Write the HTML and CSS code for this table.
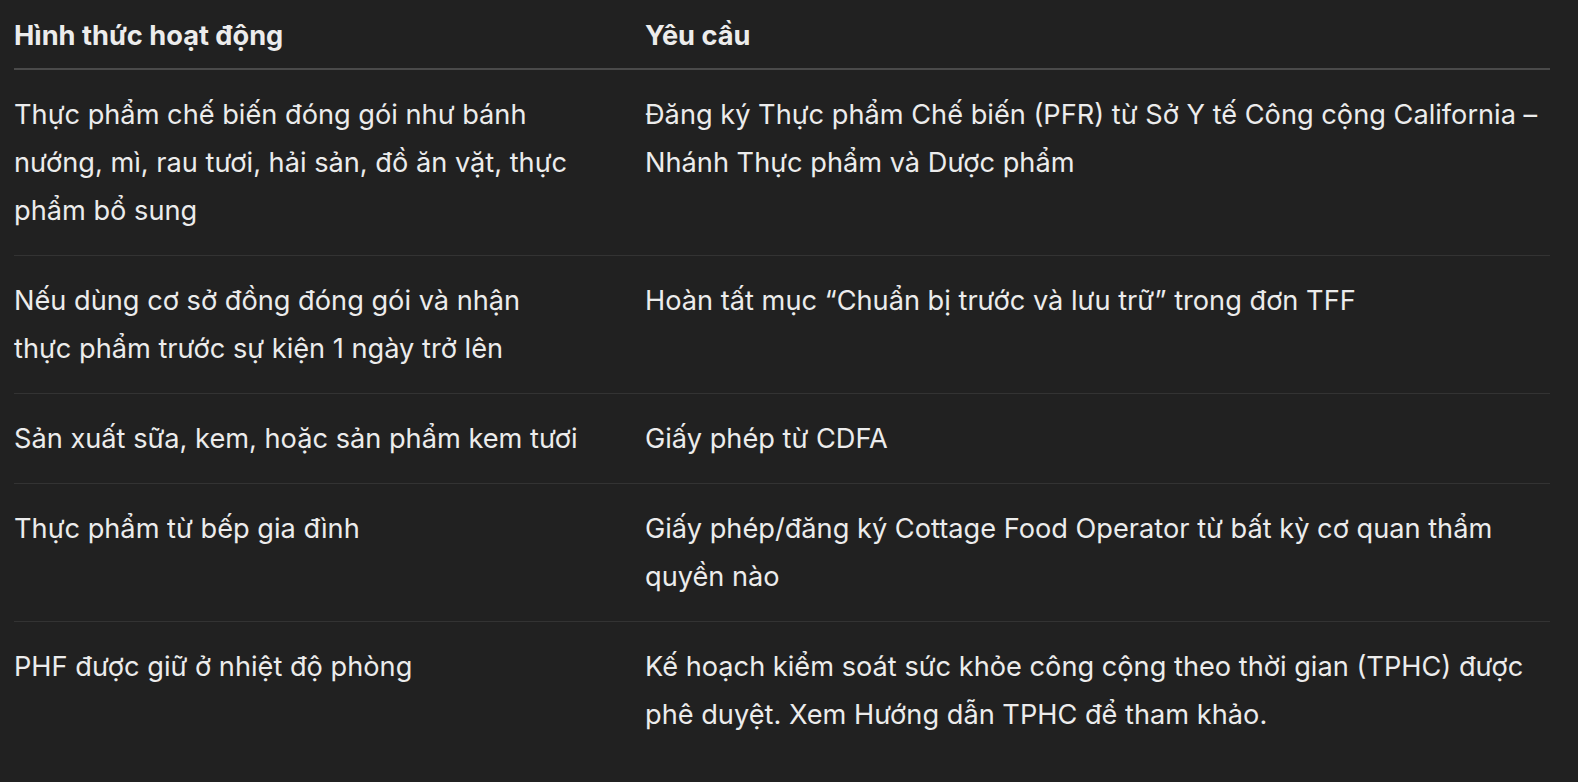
FILE: index.html
```html
<!DOCTYPE html>
<html lang="vi">
<head>
  <meta charset="UTF-8" />
  <meta name="viewport" content="width=device-width, initial-scale=1.0"/>
  <title>Yêu cầu theo hình thức hoạt động</title>
  <link rel="stylesheet" href="styles.css">
</head>
<body>
  <div class="wrap">
    <table class="req-table">
      <colgroup>
        <col class="col-type">
        <col class="col-req">
      </colgroup>
      <thead>
        <tr>
          <th>Hình thức hoạt động</th>
          <th>Yêu cầu</th>
        </tr>
      </thead>
      <tbody>
        <tr>
          <td>Thực phẩm chế biến đóng gói như bánh nướng, mì, rau tươi, hải sản, đồ ăn vặt, thực phẩm bổ sung</td>
          <td>Đăng ký Thực phẩm Chế biến (PFR) từ Sở Y tế Công cộng California – Nhánh Thực phẩm và Dược phẩm</td>
        </tr>
        <tr>
          <td>Nếu dùng cơ sở đồng đóng gói và nhận thực phẩm trước sự kiện 1 ngày trở lên</td>
          <td>Hoàn tất mục “Chuẩn bị trước và lưu trữ” trong đơn TFF</td>
        </tr>
        <tr>
          <td>Sản xuất sữa, kem, hoặc sản phẩm kem tươi</td>
          <td>Giấy phép từ CDFA</td>
        </tr>
        <tr>
          <td>Thực phẩm từ bếp gia đình</td>
          <td>Giấy phép/đăng ký Cottage Food Operator từ bất kỳ cơ quan thẩm quyền nào</td>
        </tr>
        <tr>
          <td>PHF được giữ ở nhiệt độ phòng</td>
          <td>Kế hoạch kiểm soát sức khỏe công cộng theo thời gian (TPHC) được phê duyệt. Xem Hướng dẫn TPHC để tham khảo.</td>
        </tr>
      </tbody>
    </table>
  </div>
</body>
</html>
```

FILE: styles.css
```css
body {
  margin: 0;
  padding: 0;
  background: #212121;
  color: #ececec;
  font-family: Inter, "Noto Sans", sans-serif;
  font-size: 27.2px;
  line-height: 48px;
}
.wrap {
  padding: 0 28px 0 14px;
}
.req-table {
  width: 100%;
  border-collapse: collapse;
  table-layout: fixed;
}
.col-type {
  width: 631px;
}
th {
  text-align: left;
  font-weight: 700;
  padding: 12px 0 8px;
  border-bottom: 2px solid #4a4a4a;
}
td {
  vertical-align: top;
  padding: 21px 0 20px;
  border-bottom: 1px solid #333333;
}
th:first-child, td:first-child {
  padding-right: 64px;
}
tbody tr:last-child td {
  border-bottom: none;
}
```
